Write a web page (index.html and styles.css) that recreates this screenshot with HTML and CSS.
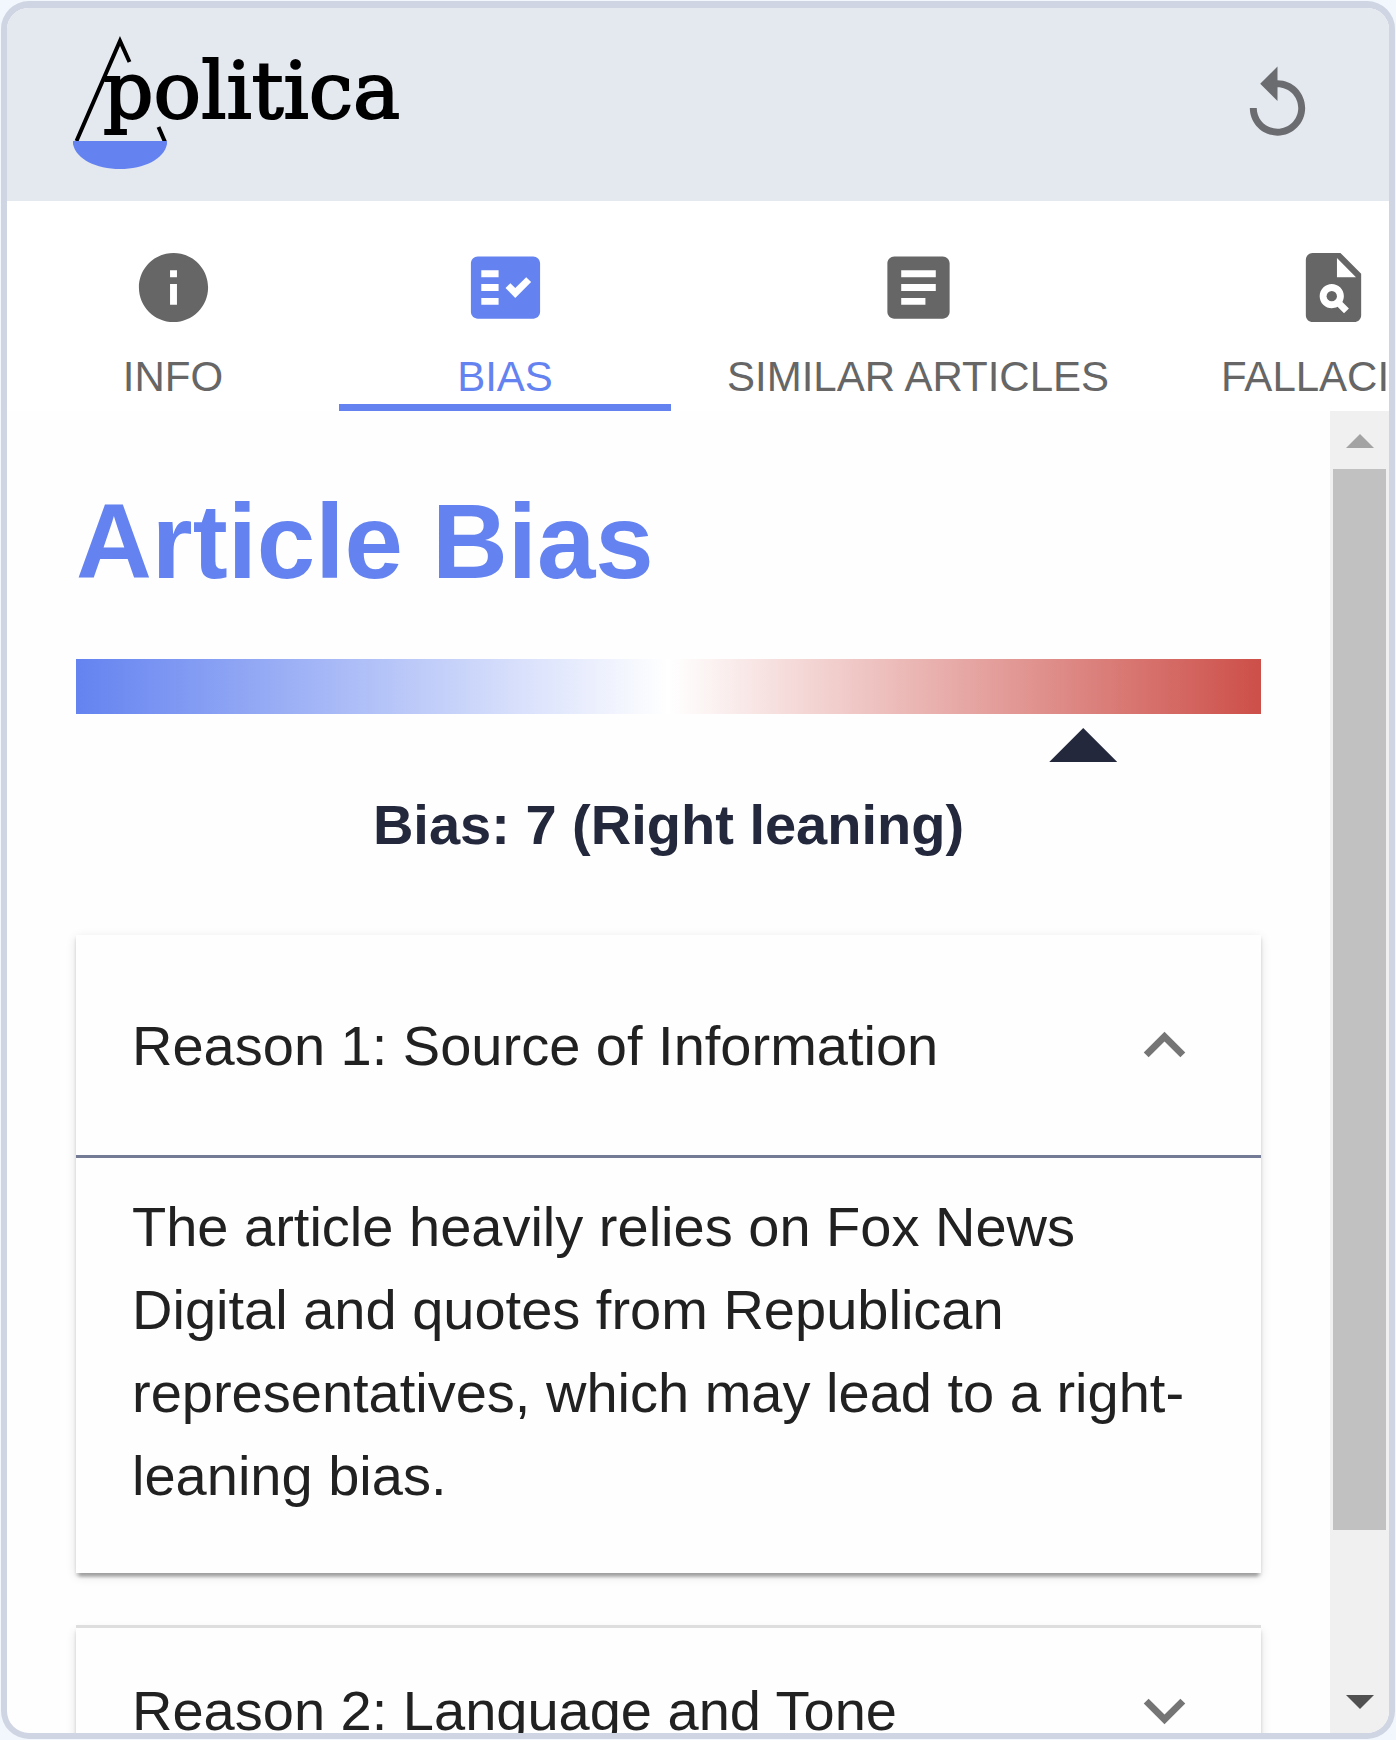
FILE: index.html
```html
<!DOCTYPE html>
<html lang="en">
<head>
<meta charset="utf-8">
<title>Apolitica</title>
<link rel="stylesheet" href="styles.css">
</head>
<body>
<div class="panel">
  <header class="header">
    <svg class="logo" viewBox="0 0 326 132" role="img" aria-label="Apolitica">
      <path class="logo-line" d="M3.500 103L47 3l9.500 21M85.500 89l6.500 15"/>
      <path class="logo-bowl" d="M0 103h94v3c-3 15-23 25-47 25S3 121 0 106z"/>
      <text class="logo-text" x="30" y="80">politica</text>
    </svg>
    <button class="icon-button" type="button" aria-label="Reload">
      <svg class="icon" viewBox="0 0 24 24"><path d="M12 5V1L7 6l5 5V7c3.310 0 6 2.690 6 6s-2.690 6-6 6-6-2.690-6-6H4c0 4.420 3.580 8 8 8s8-3.580 8-8-3.580-8-8-8z"/></svg>
    </button>
  </header>

  <nav class="tabs" role="tablist">
    <button class="tab" type="button" role="tab">
      <svg class="icon" viewBox="0 0 24 24"><path d="M12 2C6.480 2 2 6.480 2 12s4.480 10 10 10 10-4.480 10-10S17.520 2 12 2zm1 15h-2v-6h2v6zm0-8h-2V7h2v2z"/></svg>
      INFO
    </button>
    <button class="tab tab-active" type="button" role="tab" aria-selected="true">
      <svg class="icon" viewBox="0 0 24 24"><path d="M20 3H4c-1.100 0-2 .9-2 2v14c0 1.100.9 2 2 2h16c1.100 0 2-.9 2-2V5c0-1.100-.9-2-2-2zM10 17H5v-2h5v2zm0-4H5v-2h5v2zm0-4H5V7h5v2zm4.820 6L12 12.160l1.410-1.410 1.410 1.420L17.990 9l1.420 1.420L14.820 15z"/></svg>
      BIAS
    </button>
    <button class="tab" type="button" role="tab">
      <svg class="icon" viewBox="0 0 24 24"><path d="M19 3H5c-1.100 0-2 .9-2 2v14c0 1.100.9 2 2 2h14c1.100 0 2-.9 2-2V5c0-1.100-.9-2-2-2zm-5 14H7v-2h7v2zm3-4H7v-2h10v2zm0-4H7V7h10v2z"/></svg>
      SIMILAR ARTICLES
    </button>
    <button class="tab" type="button" role="tab">
      <svg class="icon" viewBox="0 0 24 24"><path d="M14 2H6c-1.100 0-2 .9-2 2v16c0 1.100.9 2 2 2h12c1.100 0 2-.9 2-2V8l-6-6zm1.040 17.450-1.880-1.880c-1.330.71-3.010.53-4.130-.59-1.370-1.370-1.370-3.580 0-4.950 1.370-1.370 3.580-1.370 4.950 0 1.120 1.120 1.300 2.800.59 4.130l1.880 1.880-1.410 1.410zM13 9V3.500L18.500 9H13z"/><circle cx="11.500" cy="14.500" r="1.500"/></svg>
      FALLACIES
    </button>
  </nav>

  <div class="body">
    <main class="content">
      <h1 class="title">Article Bias</h1>
      <div class="scale"></div>
      <div class="pointer-track"><div class="pointer" style="left: 85%"></div></div>
      <p class="score">Bias: 7 (Right leaning)</p>

      <section class="card">
        <button class="card-header card-header-open" type="button" aria-expanded="true" aria-controls="reason-1">
          <span>Reason 1: Source of Information</span>
          <svg class="icon" viewBox="0 0 24 24"><path d="m12 8-6 6 1.410 1.410L12 10.830l4.590 4.580L18 14z"/></svg>
        </button>
        <p class="card-text" id="reason-1">The article heavily relies on Fox News Digital and quotes from Republican representatives, which may lead to a right-leaning bias.</p>
      </section>

      <section class="card card-divided">
        <button class="card-header" type="button" aria-expanded="false">
          <span>Reason 2: Language and Tone</span>
          <svg class="icon" viewBox="0 0 24 24"><path d="M16.590 8.590 12 13.170 7.410 8.590 6 10l6 6 6-6z"/></svg>
        </button>
      </section>
    </main>

    <div class="scrollbar" aria-hidden="true">
      <svg class="arrow arrow-up" viewBox="0 0 28 14"><path d="M0 14L14 0l14 14z"/></svg>
      <div class="groove"><div class="thumb" style="height: 88%"></div></div>
      <svg class="arrow arrow-down" viewBox="0 0 28 14"><path d="M0 0h28L14 14z"/></svg>
    </div>
  </div>
</div>
</body>
</html>
```
FILE: styles.css
```css
* {
  box-sizing: border-box;
}

body {
  margin: 0;
  background: #f1f7fc;
  color: #212121;
  font-family: "Liberation Sans", Arial, sans-serif;
  font-size: 56px;
  line-height: 83px;
}

button {
  margin: 0;
  padding: 0;
  border: 0;
  background: none;
  color: inherit;
  font: inherit;
  cursor: pointer;
}

.panel {
  display: flex;
  flex-direction: column;
  height: calc(100vh - 2px);
  margin: 1px;
  overflow: hidden;
  border: 6px solid #cfd5e2;
  border-top-width: 7px;
  border-radius: 28px;
  background: #fefefe;
}

.icon {
  flex: none;
  display: block;
  width: 83px;
  height: 83px;
  fill: currentColor;
}

.header {
  flex: none;
  display: flex;
  align-items: center;
  justify-content: space-between;
  padding: 30px 70px 31px 66px;
  background: #e4e8ef;
}

.logo {
  display: block;
  width: 326px;
  height: 132px;
  overflow: visible;
}

.logo-line {
  fill: none;
  stroke: #000;
  stroke-width: 4;
}

.logo-bowl {
  fill: #6483f0;
}

.logo-text {
  font-family: "DejaVu Serif", serif;
  font-size: 79px;
  stroke: #000;
  stroke-width: 2;
}

.icon-button {
  color: #6b6c6f;
}

.tabs {
  flex: none;
  display: flex;
  overflow: hidden;
  background: #fff;
}

.tab {
  flex: none;
  display: flex;
  flex-direction: column;
  align-items: center;
  gap: 22px;
  min-width: 332px;
  padding: 45px 56px 1px;
  border-bottom: 7px solid transparent;
  color: #666;
  font-size: 42px;
  line-height: 52px;
}

.tab-active {
  border-color: #6483f0;
  color: #6483f0;
}

.body {
  flex: 1;
  display: flex;
  min-height: 0;
}

.content {
  flex: 1;
  min-width: 0;
  padding: 71px 69px;
  overflow: hidden;
}

.title {
  margin: 0 0 57px;
  color: #6483f0;
  font-size: 105px;
  line-height: 120px;
}

.scale {
  height: 55px;
  background: linear-gradient(to right, #6483f0, #fff 50%, #cd4f49);
}

.pointer-track {
  position: relative;
  height: 34px;
  margin: 14px 0 21px;
}

.pointer {
  position: absolute;
  width: 68px;
  height: 34px;
  margin-left: -34px;
  background: #23283c;
  clip-path: polygon(50% 0, 100% 100%, 0 100%);
}

.score {
  margin: 0 0 69px;
  color: #23283c;
  font-weight: bold;
  text-align: center;
}

.card {
  margin-bottom: 55px;
  background: #fefefe;
  box-shadow: 0 7px 3px -3px rgba(0, 0, 0, 0.2), 0 3px 3px rgba(0, 0, 0, 0.14), 0 3px 10px rgba(0, 0, 0, 0.12);
}

.card-divided {
  position: relative;
}

.card-divided::before {
  content: "";
  position: absolute;
  top: -3px;
  right: 0;
  left: 0;
  height: 3px;
  background: #dedede;
}

.card-header {
  display: flex;
  align-items: center;
  justify-content: space-between;
  width: 100%;
  min-height: 164px;
  padding: 0 55px 0 56px;
  text-align: left;
}

.card-header .icon {
  color: #757575;
}

.card-header-open {
  min-height: 223px;
  border-bottom: 3px solid #747c95;
}

.card-text {
  margin: 0;
  padding: 27px 56px 56px;
}

.scrollbar {
  flex: none;
  display: flex;
  flex-direction: column;
  align-items: center;
  width: 59px;
  background: #f0f0f0;
}

.arrow {
  display: block;
  width: 28px;
  height: 14px;
}

.arrow-up {
  margin: 23px 0 21px;
  fill: #a3a3a3;
}

.arrow-down {
  margin: 20px 0 24px;
  fill: #505050;
}

.groove {
  flex: 1;
  width: 53px;
}

.thumb {
  background: #c1c1c1;
}
```
